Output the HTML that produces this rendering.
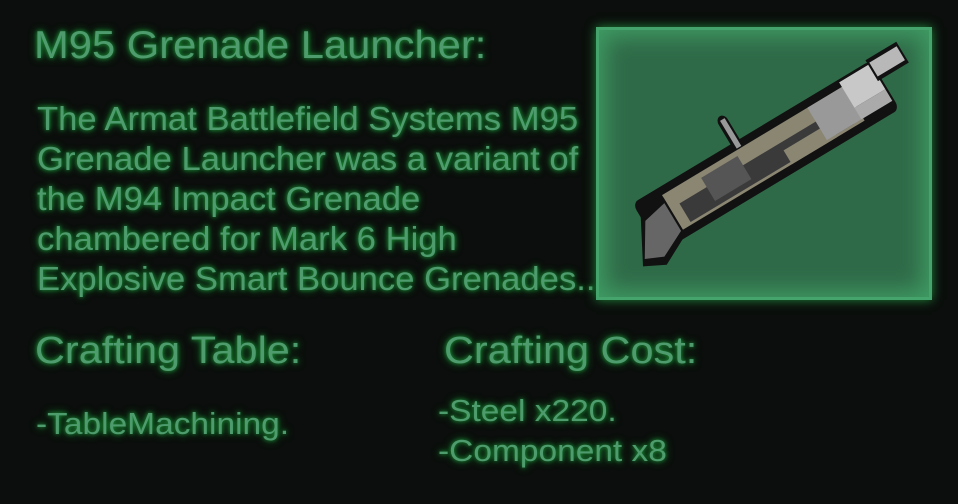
<!DOCTYPE html>
<html><head><style>
html,body{margin:0;padding:0;background:#0b0e0c;width:958px;height:504px;overflow:hidden}
.t{position:absolute;font-family:"Liberation Sans",sans-serif;color:#4e9c6d;text-shadow:0 0 4px #1e9a3a,0 0 8px #137a2a;white-space:nowrap;margin:0;transform-origin:0 0}
#box{position:absolute;left:596px;top:27px;width:336px;height:273px;background:#2f6a48;box-shadow:inset 0 0 0 3px #44a46b,inset 0 0 22px 10px #3f9a62,0 0 10px #1f8a3a}
</style></head><body>
<div class="t" style="left:34px;top:24px;font-size:39px;transform:scaleX(1.07)">M95 Grenade Launcher:</div>
<div class="t" style="left:37px;top:99px;font-size:33px;line-height:40px;transform:scaleX(1.05)">The Armat Battlefield Systems M95<br>Grenade Launcher was a variant of<br>the M94 Impact Grenade<br>chambered for Mark 6 High<br>Explosive Smart Bounce Grenades..</div>
<div class="t" style="left:35px;top:330px;font-size:38px;transform:scaleX(1.09)">Crafting Table:</div>
<div class="t" style="left:444px;top:330px;font-size:38px;transform:scaleX(1.09)">Crafting Cost:</div>
<div class="t" style="left:36px;top:406px;font-size:31px;transform:scaleX(1.08)">-TableMachining.</div>
<div class="t" style="left:438px;top:391px;font-size:31px;line-height:40px;transform:scaleX(1.08)">-Steel x220.<br>-Component x8</div>
<div id="box">
<svg width="336" height="273" viewBox="0 0 336 273">
<g transform="translate(168,132) rotate(-31) scale(1.06,1.35)">
<rect x="-128" y="-22" width="262" height="42" rx="6" fill="#111"/>
<rect x="-100" y="-16" width="200" height="30" fill="#8a8672"/>
<rect x="-90" y="-4" width="180" height="16" fill="#3a3a3a"/>
<rect x="-60" y="-12" width="40" height="20" fill="#555"/>
<rect x="20" y="2" width="50" height="12" fill="#8a8672"/>
<rect x="60" y="-16" width="40" height="28" fill="#999"/>
<rect x="98" y="-20" width="34" height="22" fill="#c8c8c8"/>
<rect x="98" y="2" width="34" height="10" fill="#aaa"/>
<rect x="130" y="-24" width="34" height="18" fill="#111"/>
<rect x="132" y="-21" width="30" height="12" fill="#b8b8b8"/>
<path d="M-128,-10 L-100,-14 L-100,18 L-130,30 L-150,22 Z" fill="#111"/>
<path d="M-126,-6 L-102,-10 L-102,14 L-128,24 L-145,18 Z" fill="#666"/>
<rect x="-20" y="-44" width="10" height="28" rx="5" fill="#111"/>
<rect x="-17" y="-41" width="5" height="24" fill="#999"/>
</g>
</svg>
</div>
</body></html>
